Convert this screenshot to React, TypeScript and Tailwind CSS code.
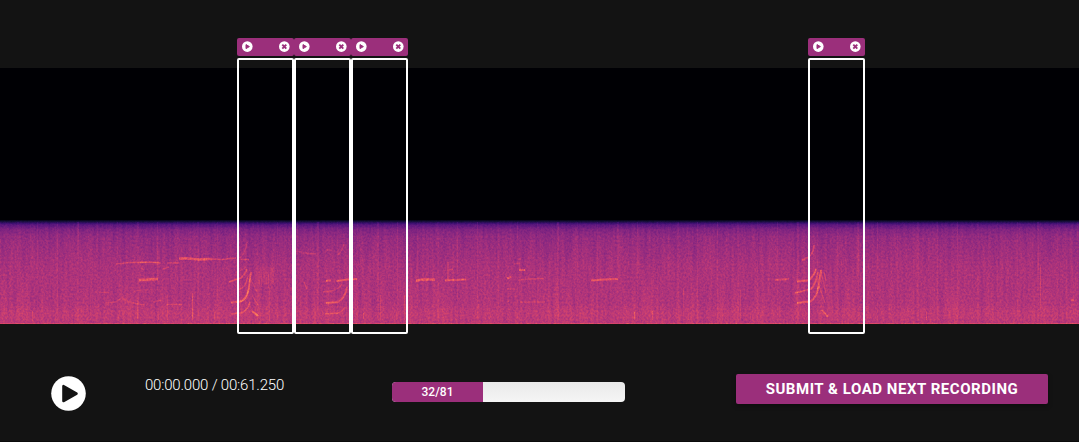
import React from "react";

const REGIONS = [
  { id: 1, left: 237 },
  { id: 2, left: 294 },
  { id: 3, left: 351 },
  { id: 4, left: 808 },
];

function PlayIcon({ className }: { className: string }) {
  return (
    <svg viewBox="0 0 35 35" className={className} aria-hidden="true">
      <circle cx="17.5" cy="17.5" r="17.3" fill="white" />
      <path
        d="M12.4 10.1 V25.1 L25.6 17.6 Z"
        fill="#131313"
        stroke="#131313"
        strokeWidth="2.4"
        strokeLinejoin="round"
      />
    </svg>
  );
}

function SmallPlay() {
  return (
    <svg viewBox="0.5 0 11 11" className="block size-[11px]" aria-hidden="true">
      <circle cx="5.8" cy="5.6" r="5.3" fill="white" />
      <path d="M4.5 3.6 V7.6 L7.9 5.6 Z" fill="#9b2f7b" stroke="#9b2f7b" strokeWidth="1" strokeLinejoin="round" />
    </svg>
  );
}

function SmallClose() {
  return (
    <svg viewBox="0.5 0 11 11" className="block size-[11px]" aria-hidden="true">
      <circle cx="5.8" cy="5.6" r="5.3" fill="white" />
      <path d="M3.8 3.6 L7.8 7.6 M7.8 3.6 L3.8 7.6" stroke="#9b2f7b" strokeWidth="1.9" />
    </svg>
  );
}

/* Bird calls: [path, stroke width, level] in page columns and rows. */
const CALLS: [string, number, number][] = [
  ["M116 264 L130 262.5 L150 262 L161 263 M167 263 L179 263", 1.7, 0.2],
  ["M137 262.5 H160", 1.5, 0.14],
  ["M179 258.5 L187 258.5 L200 259.5 L212 259", 2.3, 0.31],
  ["M212 259 L222 259.5 L236 258 M241 259.5 H249", 1.6, 0.22],
  ["M139 280 L148 279.5 L158 279", 2.3, 0.33],
  ["M134 291 L147 290 L160 290 M95 292 L110 293", 1, 0.1],
  ["M141 268 L144 270 M163 269 L169 267", 1.4, 0.16],
  ["M163 279 L171 279 M180 280 H192", 1.2, 0.1],
  ["M105 303 L115 302 L122 298 L129 302 L138 304 L145 305 M153 302 L161 300", 1.5, 0.16],
  ["M166 304.5 H182", 1.5, 0.18],
  ["M229 282 L236 279.5 L241 278 Q246 273 247 269", 1.7, 0.26],
  ["M231 302.5 L238 302 Q247 301 249 287 L251 272", 1.8, 0.31],
  ["M240 302 Q247 300 249 288", 1.5, 0.14],
  ["M238 290 Q246 288 248 276", 1.4, 0.21],
  ["M231 314 L240 313 Q247 312 250 302", 1.6, 0.22],
  ["M240 258 Q246 252 247 242 M240 271 L246 267", 1.4, 0.16],
  ["M251 280 L257 292 M252 295 L258 305", 1.1, 0.17],
  ["M252 311 L258 316", 2, 0.34],
  ["M295 251 L302 252 M303 253 L316 254", 1.5, 0.17],
  ["M304 282 L307 289", 1.4, 0.18],
  ["M326 281 L331 280.5 M336 281 L348 279.5 L357 279", 2.1, 0.31],
  ["M323 292 L330 291 Q338 290 342 284", 1.3, 0.17],
  ["M326 303 L338 302 Q345 298 347 287", 1.8, 0.28],
  ["M325 314 L338 313 Q343 311 345 307", 1.5, 0.2],
  ["M326 250 H332 M338 255 Q343 249 344 244", 1.4, 0.16],
  ["M416 280.5 L424 279.5 L435 279.5", 2.3, 0.32],
  ["M445 280.5 L454 280 L466 279.5", 2.2, 0.28],
  ["M447 269.5 L453 269.5 M448 262 V281", 1.5, 0.17],
  ["M507 278.5 L511 277 M519 270 H525", 2.2, 0.3],
  ["M518 280 L530 279 L544 278.5", 1.6, 0.17],
  ["M507 289 H515 M507 302 L509 301 M520 302 L545 302", 1.4, 0.14],
  ["M518 259 H521 M514 264 L520 263", 1.4, 0.16],
  ["M591 280.5 L604 279.5 L618 279", 2.2, 0.31],
  ["M775 280 L789 279", 2, 0.22],
  ["M797 281.5 L806 280.5 L810 279 Q815 274 816 269", 1.8, 0.3],
  ["M795 293 L803 291 L811 289 Q816 284 818 272", 1.8, 0.26],
  ["M797 303 L810 301.5 Q817 299 819 283 L821 270", 1.9, 0.31],
  ["M802 260 L809 257 Q814 252 814 245", 1.5, 0.22],
  ["M821 272 L826 293 M824 272 L826 281 M819 286 L825 303", 1.2, 0.19],
  ["M822 310 L828 317", 1.8, 0.29],
  ["M1071 300 H1074", 1.8, 0.22],
];

/* Short broadband clicks: [column, top, bottom, level]. */
const CLICKS: [number, number, number, number][] = [
  [32, 311, 321, 0.14], [90, 295, 320, 0.06], [137, 300, 319, 0.08], [167, 294, 320, 0.1],
  [192, 293, 320, 0.2], [214, 312, 320, 0.13], [269, 287, 322, 0.09], [363, 313, 319, 0.2],
  [380, 295, 320, 0.1], [396, 312, 320, 0.12], [404, 295, 320, 0.13], [478, 304, 309, 0.1],
  [634, 312, 320, 0.18], [652, 311, 320, 0.18], [683, 288, 320, 0.09], [740, 290, 318, 0.1],
  [750, 314, 319, 0.12], [926, 312, 320, 0.18], [1040, 265, 309, 0.13], [158, 311, 320, 0.12],
  [118, 315, 321, 0.1], [346, 302, 320, 0.1], [688, 313, 320, 0.1],
];

const MAGMA_R = "0 0.078 0.231 0.392 0.549 0.718 0.87 0.969 0.996 0.996 0.988";
const MAGMA_G = "0 0.055 0.059 0.102 0.161 0.216 0.286 0.44 0.624 0.812 0.992";
const MAGMA_B = "0.016 0.212 0.439 0.502 0.506 0.475 0.408 0.361 0.427 0.573 0.749";

function Spectrogram() {
  return (
    <svg viewBox="0 220 1079 104" width="1079" height="104" className="block h-[104px] w-[1079px]" aria-hidden="true">
      <defs>
        <linearGradient id="level" x1="0" y1="0" x2="0" y2="1">
          <stop offset="0" stopColor="#080808" />
          <stop offset="0.02" stopColor="#242424" />
          <stop offset="0.045" stopColor="#464646" />
          <stop offset="0.09" stopColor="#5e5e5e" />
          <stop offset="0.16" stopColor="#6b6b6b" />
          <stop offset="0.3" stopColor="#727272" />
          <stop offset="0.45" stopColor="#797979" />
          <stop offset="0.8" stopColor="#7e7e7e" />
          <stop offset="0.9" stopColor="#868686" />
          <stop offset="1" stopColor="#838383" />
        </linearGradient>
        <filter
          id="magma"
          filterUnits="userSpaceOnUse"
          x="0"
          y="220"
          width="1079"
          height="104"
          colorInterpolationFilters="sRGB"
        >
          <feTurbulence type="fractalNoise" baseFrequency="0.53 0.47" numOctaves={2} seed={7} result="t1" />
          <feColorMatrix in="t1" type="matrix" values="1 0 0 0 0 1 0 0 0 0 1 0 0 0 0 0 0 0 0 1" result="grain" />
          <feTurbulence type="fractalNoise" baseFrequency="0.31 0.018" numOctaves={2} seed={21} result="t2" />
          <feColorMatrix in="t2" type="matrix" values="0 1 0 0 0 0 1 0 0 0 0 1 0 0 0 0 0 0 0 1" result="streaks" />
          <feComposite in="SourceGraphic" in2="grain" operator="arithmetic" k1={0.34} k2={0.83} k3={0} k4={0} result="a" />
          <feComposite in="a" in2="streaks" operator="arithmetic" k1={0.2} k2={0.89} k3={0} k4={0} result="b" />
          <feComponentTransfer in="b">
            <feFuncR type="table" tableValues={MAGMA_R} />
            <feFuncG type="table" tableValues={MAGMA_G} />
            <feFuncB type="table" tableValues={MAGMA_B} />
            <feFuncA type="linear" slope="0" intercept="1" />
          </feComponentTransfer>
        </filter>
      </defs>
      <g filter="url(#magma)">
        <rect x="0" y="220" width="1079" height="104" fill="url(#level)" />
        {Array.from({ length: 54 }, (_, i) => (
          <rect key={i} x={17 + i * 20} y="222" width={i % 3 === 0 ? 2 : 1} height="99" fill="white" opacity={0.035 + (i % 4) * 0.01} />
        ))}
        <rect x="258" y="267" width="16" height="17" fill="white" opacity="0.05" />
        {Array.from({ length: 8 }, (_, i) => (
          <path key={i} d={`M${257 + i * 2.3} ${268 + (i % 3) * 3} v${15 - (i % 4)}`} stroke="white" opacity="0.08" />
        ))}
        {CLICKS.map(([x, top, bottom, level], i) => (
          <rect key={i} x={x} y={top} width="1" height={bottom - top} fill="white" opacity={level} />
        ))}
        {CALLS.map(([d, width, level], i) => (
          <path key={i} d={d} stroke="white" strokeWidth={width} opacity={level} fill="none" />
        ))}
        <rect x="0" y="323" width="1079" height="1" fill="#969696" />
      </g>
    </svg>
  );
}

function Region({ left }: { left: number }) {
  return (
    <div className="absolute top-[38px] w-[57px]" style={{ left }}>
      <div className="flex h-[18px] items-center justify-between rounded-[2px] bg-[#9b2f7b] px-[4.5px] pb-[0.5px]">
        <SmallPlay />
        <SmallClose />
      </div>
      <div className="mt-[2px] h-[276px] rounded-[2px] border-2 border-white" />
    </div>
  );
}

export default function App() {
  return (
    <main className="relative flex h-[442px] w-[1079px] flex-col overflow-hidden border-b border-[#0b0b0b] bg-[#131313] font-['Roboto',sans-serif] text-white">
      <section className="pt-[68px]">
        <div className="h-[152px] bg-[#000004]" />
        <Spectrogram />
        {REGIONS.map((region) => (
          <Region key={region.id} left={region.left} />
        ))}
      </section>
      <footer className="flex items-start pt-[50px] pl-[51px]">
        <button className="mt-[2px] block size-[35px]" aria-label="Play">
          <PlayIcon className="block size-[35px]" />
        </button>
        <div className="mt-px ml-[59px] w-[247px] text-[15px] leading-[21px] font-light tracking-[-0.2px] whitespace-nowrap">
          00:00.000 / 00:61.250
        </div>
        <div className="mt-[8px] flex h-5 w-[233px] overflow-hidden rounded-[4px] bg-linear-to-b from-[#e9e9e9] to-[#f5f5f5]">
          <div className="flex w-[91px] items-center justify-center bg-[#9b2f7b] text-[12px] leading-5 font-medium">
            32/81
          </div>
        </div>
        <button className="ml-[111px] h-[30px] w-[312px] rounded-[2px] bg-[#9b2f7b] text-[15px] leading-[30px] font-bold tracking-[0.54px] whitespace-nowrap shadow-[0_2px_5px_rgba(0,0,0,0.3)]">
          SUBMIT &amp; LOAD NEXT RECORDING
        </button>
      </footer>
    </main>
  );
}
